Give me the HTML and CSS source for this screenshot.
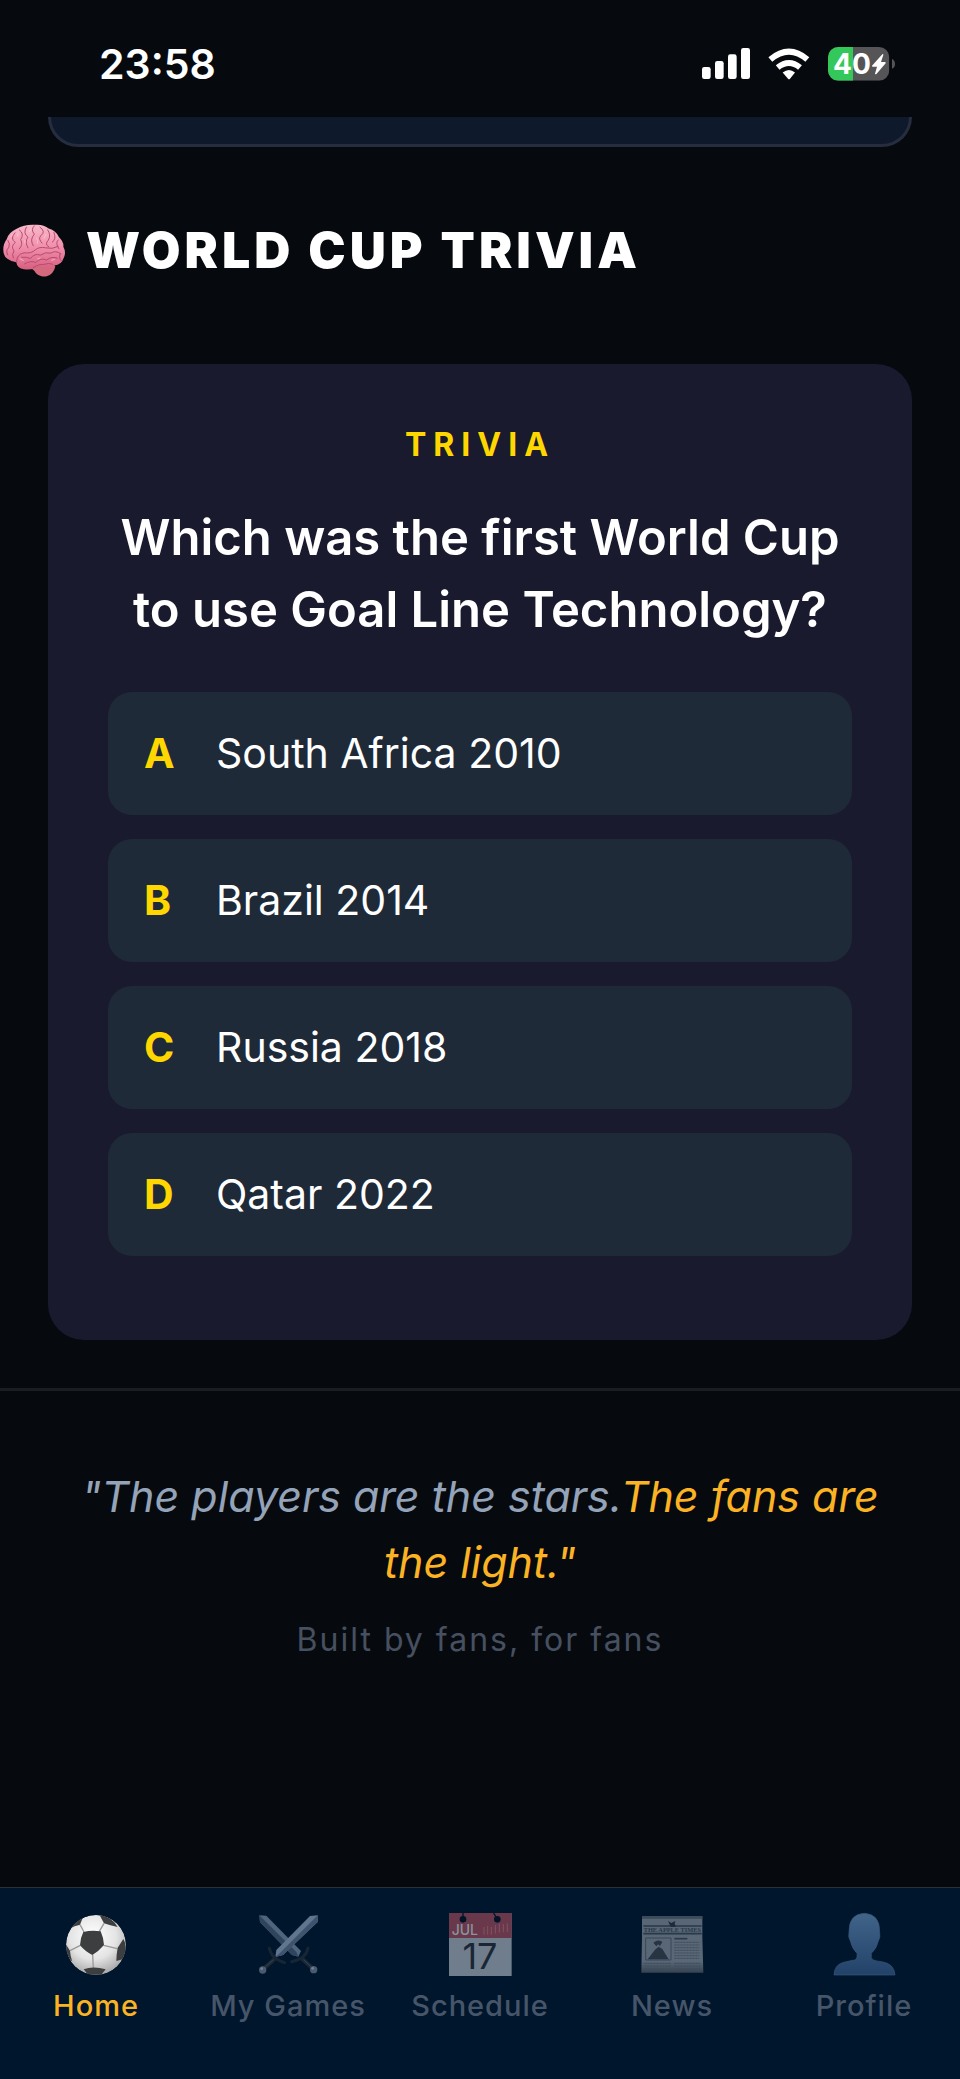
FILE: index.html
```html
<!DOCTYPE html>
<html lang="en">
<head>
<meta charset="utf-8">
<meta name="viewport" content="width=device-width, initial-scale=1">
<title>World Cup Trivia</title>
<link rel="stylesheet" href="styles.css">
</head>
<body>
<header class="status">
  <time class="clock">23:58</time>
  <div class="indicators">
    <svg class="signal" viewBox="0 0 144 93" aria-label="Signal"><g fill="#fff"><rect x="0" y="57" width="26" height="36" rx="7"/><rect x="39" y="39" width="26" height="54" rx="7"/><rect x="78" y="19" width="26" height="74" rx="7"/><rect x="117" y="0" width="27" height="93" rx="7"/></g></svg>
    <svg class="wifi" viewBox="864 143 126 95" aria-label="Wi-Fi"><g fill="none" stroke="#fff" stroke-width="18"><path d="M871 177Q927 130 982 177"/><path d="M893 201Q927 174 960 201"/></g><path fill="#fff" d="M908 216Q927 201 945 216L930 235Q927 238 924 235Z"/></svg>
    <svg class="battery" viewBox="1044 141 201 102" aria-label="Battery 40%, charging">
      <clipPath id="cell"><rect x="1044" y="141" width="184" height="101" rx="31"/></clipPath>
      <g clip-path="url(#cell)"><path fill="#555558" d="M1044 141h184v101h-184z"/><path fill="#34c759" d="M1044 141h75v101h-75z"/></g>
      <path fill="#555558" d="M1236 177Q1245 181 1245 192T1236 206Z"/>
      <text class="battery-level" x="1059" y="221">40</text>
      <path fill="#fff" d="M1207 163L1176 197Q1175 200 1179 200H1191L1185 221Q1186 225 1190 221L1217 190Q1218 186 1214 186H1203L1210 165Q1210 161 1207 163Z"/>
    </svg>
  </div>
</header>
<main class="content">
  <div class="previous-card"></div>
  <h1 class="title">
    <svg class="brain" viewBox="6 668 192 164" aria-hidden="true">
      <defs><linearGradient id="pink" x1="0" y1="0" x2="0" y2="1"><stop offset="0" stop-color="#f8b9ca"/><stop offset=".5" stop-color="#f08fac"/><stop offset="1" stop-color="#d85f80"/></linearGradient></defs>
      <path fill="#d4687c" d="M82 800Q100 803 108 818Q120 829 138 828Q160 824 166 798L150 780Z"/>
      <path fill="url(#pink)" d="M10 750Q9 730 20 716Q27 695 50 685Q72 672 102 673Q130 670 146 684Q168 690 177 710Q192 724 190 739Q200 757 190 775Q185 793 163 795Q145 806 122 796Q98 810 72 806Q51 803 49 785Q34 784 22 775Q10 766 10 750Z"/>
      <g fill="none" stroke="#b84a70" stroke-width="3" stroke-linecap="round"><path d="M50 784Q49 762 72 757Q94 760 106 748Q118 738 137 742Q157 747 174 738M24 720Q32 729 26 742Q16 749 23 763M45 697Q29 714 46 726Q31 737 42 751Q34 762 40 772M58 688Q74 700 62 717Q70 733 58 745M79 680Q68 699 84 710Q73 724 84 742M103 676Q91 687 103 701Q88 718 100 736M120 680Q139 693 122 706Q114 715 126 728M143 688Q154 703 145 719Q133 731 146 739M162 696Q170 716 157 725M175 718Q164 727 177 745M65 770Q82 769 91 774Q105 757 121 764Q137 753 153 758Q166 748 183 760M74 790Q92 779 107 786Q125 770 139 779Q156 766 172 773M100 801Q118 790 130 792Q148 786 158 791M180 760Q176 775 184 781"/></g>
      <g fill="none" stroke="#ffd5df" stroke-width="3" stroke-linecap="round" opacity=".6"><path d="M33 709L38 701M52 707L54 698M89 693L93 684M110 713Q116 720 112 729M132 714L137 703M75 720L75 728M60 775L70 780M113 775L120 773M155 779L163 777"/></g>
    </svg>
    <span>WORLD CUP TRIVIA</span>
  </h1>
  <section class="card">
    <p class="eyebrow">TRIVIA</p>
    <h2 class="question">Which was the first World Cup to use Goal Line Technology?</h2>
    <div class="options">
      <button class="option" type="button"><b class="letter">A</b><span>South Africa 2010</span></button>
      <button class="option" type="button"><b class="letter">B</b><span>Brazil 2014</span></button>
      <button class="option" type="button"><b class="letter">C</b><span>Russia 2018</span></button>
      <button class="option" type="button"><b class="letter">D</b><span>Qatar 2022</span></button>
    </div>
  </section>
  <footer class="tagline">
    <p class="quote">"The players are the stars.<span class="gold">The fans are the light."</span></p>
    <p class="credit">Built by fans, for fans</p>
  </footer>
</main>
<nav class="tabs">
  <a class="tab active" href="#home">
    <svg class="tab-icon" viewBox="191 129 189 189" aria-hidden="true">
      <defs><radialGradient id="leather" cx=".45" cy=".35" r=".65"><stop offset="0" stop-color="#fff"/><stop offset=".6" stop-color="#e4e4e4"/><stop offset="1" stop-color="#a9a9a9"/></radialGradient><clipPath id="ball"><circle cx="284" cy="225" r="90"/></clipPath></defs>
      <g clip-path="url(#ball)"><circle cx="284" cy="225" r="90" fill="url(#leather)"/>
      <path fill="none" stroke="#999" stroke-width="4" d="M248 186L236 164M294 184L308 160M307 226L348 236M274 254L276 295M237 226L206 242"/>
      <g fill="#3d3e40"><path d="M246 186Q270 180 298 184Q307 204 308 225Q292 244 273 255Q252 245 236 226Q237 203 246 186ZM204 176Q222 146 248 134L236 164Q220 167 204 176ZM295 136Q328 136 349 171Q326 166 308 160ZM366 207Q381 230 364 268L345 273Q345 253 349 233ZM193 222L206 242Q207 258 213 275Q194 260 193 222ZM247 298Q275 287 313 298L300 314H260Z"/></g></g>
    </svg>
    <span>Home</span>
  </a>
  <a class="tab" href="#games">
    <svg class="tab-icon" viewBox="196 129 189 189" aria-hidden="true">
      <g stroke-linecap="round"><path d="M248 268L216 296M333 268L364 296" stroke="#1d2836" stroke-width="12"/><path d="M244 270L222 290M337 270L358 290" stroke="#38404c" stroke-width="3"/></g>
      <path fill="#4f657e" d="M203 136L224 137L328 243L320 260L301 255L205 157Z"/><path fill="#31445e" d="M203 136L314 246L320 260L301 255L205 157Z"/>
      <path fill="#60768f" d="M378 136L355 138L254 240L251 261L274 255L378 156Z"/><path fill="#40536e" d="M378 136L264 250L251 261L274 255L378 156Z"/>
      <g fill="none" stroke="#172635" stroke-width="9" stroke-linecap="round"><path d="M233 235Q239 267 279 278M349 235Q343 267 300 275"/></g>
      <g fill="#4a5a6f"><circle cx="213" cy="300" r="11"/><circle cx="366" cy="299" r="11"/></g><g fill="#718196"><circle cx="210" cy="296" r="4"/><circle cx="363" cy="295" r="4"/></g>
    </svg>
    <span>My Games</span>
  </a>
  <a class="tab" href="#schedule">
    <svg class="tab-icon" viewBox="172 129 189 189" aria-hidden="true">
      <path fill="#6f7d8c" d="M172 129H360V318H172Z"/><path fill="#69384a" d="M172 129H360V204H172Z"/>
      <g stroke="#001429" stroke-width="4" fill="#001429"><path d="M214 129V148M306 129L317 148"/><circle cx="214" cy="148" r="8"/><circle cx="317" cy="148" r="8"/></g>
      <path stroke="#805363" stroke-width="3" d="M277 171V194M288 168V194M299 171V194M311 165V191M323 162V188M335 162V187M347 160V186"/>
      <text class="calendar-month" x="180" y="194">JUL</text><text class="calendar-day" x="265" y="297">17</text>
    </svg>
    <span>Schedule</span>
  </a>
  <a class="tab" href="#news">
    <svg class="tab-icon" viewBox="148 129 189 189" aria-hidden="true">
      <defs><linearGradient id="paper" x1="0" y1="0" x2="0" y2="1"><stop offset="0" stop-color="#586675"/><stop offset=".8" stop-color="#596776"/><stop offset="1" stop-color="#36424f"/></linearGradient></defs>
      <path fill="url(#paper)" d="M151 138H332V200L335 308H149L151 200Z"/><path fill="#3a4b5a" d="M151 138H332V146H151Z"/>
      <path stroke="#293949" stroke-width="5" d="M155 168H330M155 191H330"/><path fill="#1d2b39" d="M229 153L239 159L251 153L249 162L253 170H237Z"/>
      <text class="masthead" x="242" y="187">THE APPLE TIMES</text>
      <path fill="none" stroke="#374858" stroke-width="3" d="M162 204H238V270H162Z"/>
      <path fill="#273543" d="M168 268L190 239L201 230L212 237L231 268ZM185 218Q201 206 212 216L205 228L199 223L194 229Z"/>
      <path stroke="#2b3948" stroke-width="5" d="M248 206H287"/>
      <g fill="none" stroke="#3e4d5c" stroke-width="3" stroke-dasharray="7 2"><path d="M248 217H323M248 225H323M248 233H323M248 241H323M248 249H323M248 257H323M248 265H323M158 280H238M158 288H238M158 296H238M248 280H326M248 288H326M248 296H326"/></g>
    </svg>
    <span>News</span>
  </a>
  <a class="tab" href="#profile">
    <svg class="tab-icon" viewBox="724 128 189 189" aria-hidden="true">
      <defs><linearGradient id="person" x1="0" y1="0" x2="0" y2="1"><stop offset="0" stop-color="#416489"/><stop offset="1" stop-color="#234269"/></linearGradient></defs>
      <path fill="url(#person)" stroke="#365578" stroke-width="2" d="M727 314Q728 285 752 277Q775 271 789 269Q798 267 796 249Q781 235 776 212Q769 202 772 185Q771 131 818 129Q865 131 864 185Q867 202 860 212Q855 235 839 249V262Q840 271 870 274Q908 280 910 314Z"/>
    </svg>
    <span>Profile</span>
  </a>
</nav>
</body>
</html>
```

FILE: styles.css
```css
* { box-sizing: border-box; }

body {
  margin: 0;
  min-height: 100vh;
  display: flex;
  flex-direction: column;
  background: #060a0f;
  color: #fff;
  font-family: Inter, "Liberation Sans", sans-serif;
}

h1, h2, p { margin: 0; }
svg { display: block; flex: none; overflow: visible; }

.status {
  display: flex;
  justify-content: space-between;
  align-items: center;
  height: 117px;
  padding: 10px 65px 0 99px;
}
.clock { font-size: 41px; line-height: 48px; font-weight: 600; }
.indicators { display: flex; align-items: center; gap: 18px; }
.signal { width: 48px; height: 31px; }
.wifi { width: 42px; height: 32px; }
.battery { width: 67px; height: 34px; }
.battery-level { font-size: 84px; font-weight: 700; fill: #fff; }

.content { flex: 1; }
.previous-card {
  height: 30px;
  margin: 0 48px;
  background: #0e192c;
  border: 3px solid #252d3e;
  border-top: 0;
  border-radius: 0 0 30px 30px;
}
.title {
  display: flex;
  align-items: center;
  gap: 20px;
  padding-left: 2px;
  margin: 73px 0 83px;
  font-size: 50px;
  line-height: 61px;
  font-weight: 900;
  letter-spacing: 4px;
}
.brain { width: 64px; height: 55px; }

.card {
  margin: 0 48px 48px;
  padding: 60px 60px 84px;
  border-radius: 36px;
  background: #1a1a2e;
  text-align: center;
}
.eyebrow {
  margin-bottom: 36px;
  color: #ffd700;
  font-size: 32px;
  line-height: 42px;
  font-weight: 700;
  letter-spacing: 7px;
}
.question {
  margin-bottom: 46px;
  font-size: 49px;
  line-height: 72px;
  font-weight: 600;
}
.options { display: flex; flex-direction: column; gap: 24px; }
.option {
  display: flex;
  align-items: center;
  width: 100%;
  padding: 36px;
  border: 0;
  border-radius: 24px;
  background: #1f2a38;
  color: #fff;
  font: 400 41px/51px Inter, "Liberation Sans", sans-serif;
  text-align: left;
}
.letter { width: 72px; color: #ffd700; font-weight: 700; }

.tagline {
  padding: 72px 72px 84px;
  border-top: 3px solid #1a1d22;
  text-align: center;
}
.quote {
  color: #94a3b8;
  font-size: 43px;
  line-height: 66px;
  font-style: italic;
}
.gold { color: #fbb324; }
.credit {
  margin-top: 24px;
  color: #475060;
  font-size: 32px;
  line-height: 42px;
  letter-spacing: 2px;
}

.tabs {
  display: grid;
  grid-template-columns: repeat(5, 1fr);
  height: 192px;
  padding-top: 25px;
  border-top: 1px solid #2b3030;
  background: #00162d;
}
.tab {
  display: flex;
  flex-direction: column;
  align-items: center;
  gap: 12px;
  color: #475569;
  font-size: 29px;
  line-height: 36px;
  font-weight: 500;
  letter-spacing: 1px;
  text-decoration: none;
}
.tab.active { color: #fbb324; }
.tab-icon { width: 63px; height: 63px; }
.calendar-month { font-size: 42px; fill: #8b949f; letter-spacing: 0; }
.calendar-day { font-size: 108px; font-weight: 400; fill: #192634; text-anchor: middle; letter-spacing: 0; }
.masthead { font-family: "Liberation Serif", serif; font-size: 19px; font-weight: 700; fill: #2b3948; text-anchor: middle; letter-spacing: 0; }
```
